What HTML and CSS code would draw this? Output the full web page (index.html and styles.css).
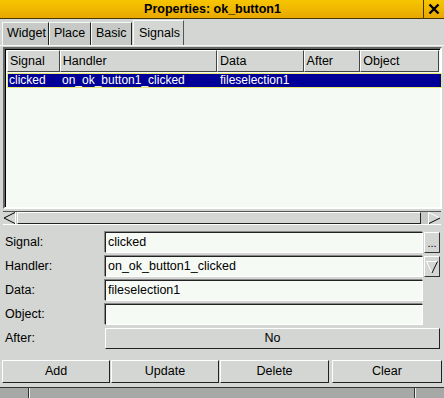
FILE: index.html
```html
<!DOCTYPE html>
<html>
<head>
<meta charset="utf-8">
<link rel="stylesheet" href="styles.css">
</head>
<body>
<div class="window">
  <div class="titlebar">
    <div class="title">Properties: ok_button1</div>
    <div class="close">
      <svg width="12" height="12" viewBox="0 0 12 12"><path d="M1.5 1.5 L10.5 10.5 M10.5 1.5 L1.5 10.5" stroke="#000" stroke-width="2.4"/></svg>
    </div>
  </div>
  <div class="tabs">
    <div class="tab t1">Widget</div>
    <div class="tab t2">Place</div>
    <div class="tab t3">Basic</div>
    <div class="tab t4 active">Signals</div>
  </div>
  <div class="page">
    <div class="listframe">
      <div class="headers">
        <div class="hcell c1">Signal</div>
        <div class="hcell c2">Handler</div>
        <div class="hcell c3">Data</div>
        <div class="hcell c4">After</div>
        <div class="hcell c5">Object</div>
      </div>
      <div class="listbody">
        <div class="row sel">
          <span class="cell c1">clicked</span>
          <span class="cell c2">on_ok_button1_clicked</span>
          <span class="cell c3">fileselection1</span>
        </div>
      </div>
    </div>
    <div class="hscroll">
      <div class="arrow left"><svg width="13" height="12" viewBox="0 0 13 12"><path d="M12 0.5 L1 6 L12 11.5 Z" fill="#d3d6d2" stroke="none"/><path d="M12 0.5 L1 6" stroke="#000"/><path d="M1 6 L12 11.5" stroke="#000"/><path d="M12.5 0 V12" stroke="#fff"/></svg></div>
      <div class="thumb"></div>
      <div class="trough-end"></div>
      <div class="arrow right"><svg width="13" height="12" viewBox="0 0 13 12"><path d="M1 0.5 L12 6" stroke="#fff"/><path d="M0.5 0 V12" stroke="#fff"/><path d="M1 11.5 L12 6" stroke="#000"/></svg></div>
    </div>
    <div class="form">
      <div class="frow">
        <div class="label">Signal:</div>
        <div class="entry">clicked</div>
        <div class="sbtn">...</div>
      </div>
      <div class="frow">
        <div class="label">Handler:</div>
        <div class="entry">on_ok_button1_clicked</div>
        <div class="sbtn"><svg width="12" height="14" viewBox="0 0 12 14"><path d="M0.5 1.5 H11.5 L6 13 Z" fill="none" stroke="#fff"/><path d="M11.5 1.5 L6 13" stroke="#000"/></svg></div>
      </div>
      <div class="frow">
        <div class="label">Data:</div>
        <div class="entry">fileselection1</div>
      </div>
      <div class="frow">
        <div class="label">Object:</div>
        <div class="entry"></div>
      </div>
      <div class="frow">
        <div class="label">After:</div>
        <div class="btn wide">No</div>
      </div>
    </div>
    <div class="buttons">
      <div class="btn b1">Add</div>
      <div class="btn b2">Update</div>
      <div class="btn b3">Delete</div>
      <div class="btn b4">Clear</div>
    </div>
  </div>
  <div class="status">
    <div class="seg s1"></div>
    <div class="seg s2"></div>
    <div class="seg s3"></div>
  </div>
</div>
</body>
</html>
```
FILE: styles.css
```css
* { box-sizing: border-box; }
html, body { margin: 0; padding: 0; }
body {
  background: #d3d6d2;
  font-family: "Liberation Sans", Arial, sans-serif;
  font-size: 12px;
  color: #000;
}
.window {
  width: 444px;
  height: 398px;
  display: flex;
  flex-direction: column;
  overflow: hidden;
}
.titlebar {
  height: 19px;
  flex: none;
  display: flex;
  background: linear-gradient(#f7c600, #e8a800);
  border-bottom: 1px solid #4a3600;
}
.title {
  flex: 1;
  text-align: center;
  font-weight: bold;
  font-size: 12.5px;
  line-height: 18px;
  padding-left: 2px;
}
.close {
  width: 21px;
  border-left: 1px solid #4a3600;
  display: flex;
  align-items: center;
  justify-content: center;
}
.tabs {
  height: 26px;
  flex: none;
  display: flex;
  align-items: flex-end;
  padding-left: 2px;
}
.tab {
  height: 23px;
  line-height: 21px;
  background: #c6c9c5;
  border-top: 1px solid #f4f7f3;
  border-left: 1px solid #f4f7f3;
  border-right: 1px solid #222;
  padding-left: 4px;
  font-size: 12.5px;
}
.tab.t1 { width: 47px; }
.tab.t2 { width: 42px; }
.tab.t3 { width: 41px; }
.tab.t4 { width: 51px; }
.tab.active {
  height: 25px;
  line-height: 24px;
  background: #d3d6d2;
  margin-left: 1px;
  padding-left: 5px;
  border-right: 1px solid #555;
}
.page {
  flex: none;
  border-top: 1px solid #f4f7f3;
  padding: 1px 2px 0 3px;
}
.listframe {
  height: 162px;
  border: 2px solid;
  border-color: #666 #fff #fff #666;
  background: #f6faf5;
  box-shadow: inset 1px 1px 0 #000;
  padding: 1px 1px 0 1px;
  display: flex;
  flex-direction: column;
}
.headers {
  height: 22px;
  display: flex;
  flex: none;
  padding-left: 1px;
}
.hcell {
  height: 22px;
  background: #d3d6d2;
  border: 1px solid;
  border-color: #fff #444 #444 #fff;
  line-height: 20px;
  padding-left: 2px;
  font-size: 12.5px;
}
.hcell.c1 { width: 53px; }
.hcell.c2 { width: 158px; }
.hcell.c3 { width: 87px; }
.hcell.c4 { width: 57px; }
.hcell.c5 { width: 79px; }
.listbody {
  flex: 1;
  padding-top: 1px;
  padding-left: 1px;
}
.row {
  height: 15px;
  display: flex;
  line-height: 13px;
}
.row.sel {
  background: #000099;
  color: #fff;
  border: 1px solid #e8e870;
  width: 435px;
}
.cell { display: block; padding-left: 1px; }
.cell.c1 { width: 53px; }
.cell.c2 { width: 158px; }
.cell.c3 { width: 87px; }
.hscroll {
  margin-top: 2px;
  height: 14px;
  width: 438px;
  display: flex;
  background: #c6c9c5;
  border-top: 1px solid #555;
  border-bottom: 1px solid #fff;
}
.arrow {
  width: 13px;
  height: 12px;
  display: flex;
  align-items: center;
  justify-content: center;
  background: #d3d6d2;
}
.thumb {
  flex: 1;
  margin-left: 1px;
  background: #d3d6d2;
  border: 1px solid;
  border-color: #fff #222 #222 #fff;
}
.trough-end { width: 7px; }
.form {
  margin-top: 7px;
  display: flex;
  flex-direction: column;
  gap: 3px;
}
.frow {
  height: 21px;
  display: flex;
  align-items: stretch;
}
.label {
  width: 102px;
  padding-left: 2px;
  line-height: 20px;
  font-size: 12.5px;
}
.entry {
  width: 318px;
  background: #f6faf5;
  border: 1px solid;
  border-color: #222 #fff #fff #222;
  box-shadow: -1px -1px 0 #888;
  padding-left: 2px;
  line-height: 19px;
  font-size: 12.5px;
}
.sbtn {
  width: 16px;
  margin-left: 1px;
  background: #d3d6d2;
  border: 1px solid;
  border-color: #fff #333 #333 #fff;
  display: flex;
  align-items: center;
  justify-content: center;
  font-size: 11px;
  line-height: 18px;
}
.btn {
  background: #d3d6d2;
  border: 1px solid;
  border-color: #fff #222 #222 #fff;
  text-align: center;
  font-size: 12.5px;
}
.btn.wide {
  width: 335px;
  line-height: 19px;
}
.buttons {
  margin-top: 11px;
  margin-left: -1px;
  display: flex;
  gap: 1px;
  height: 23px;
}
.buttons .btn { line-height: 21px; }
.btn.b1 { width: 108px; }
.btn.b2 { width: 108px; }
.btn.b3 { width: 109px; margin-right: 2px; }
.btn.b4 { width: 110px; }
.status {
  margin-top: 4px;
  flex: 1;
  display: flex;
  background: #a7a9a6;
  border-top: 1px solid #333;
}
.seg { height: 100%; }
.seg.s1 { width: 29px; border-right: 1px solid #333; }
.seg.s2 { width: 386px; border-left: 1px solid #eee; border-right: 1px solid #333; }
.seg.s3 { flex: 1; border-left: 1px solid #eee; }
```
